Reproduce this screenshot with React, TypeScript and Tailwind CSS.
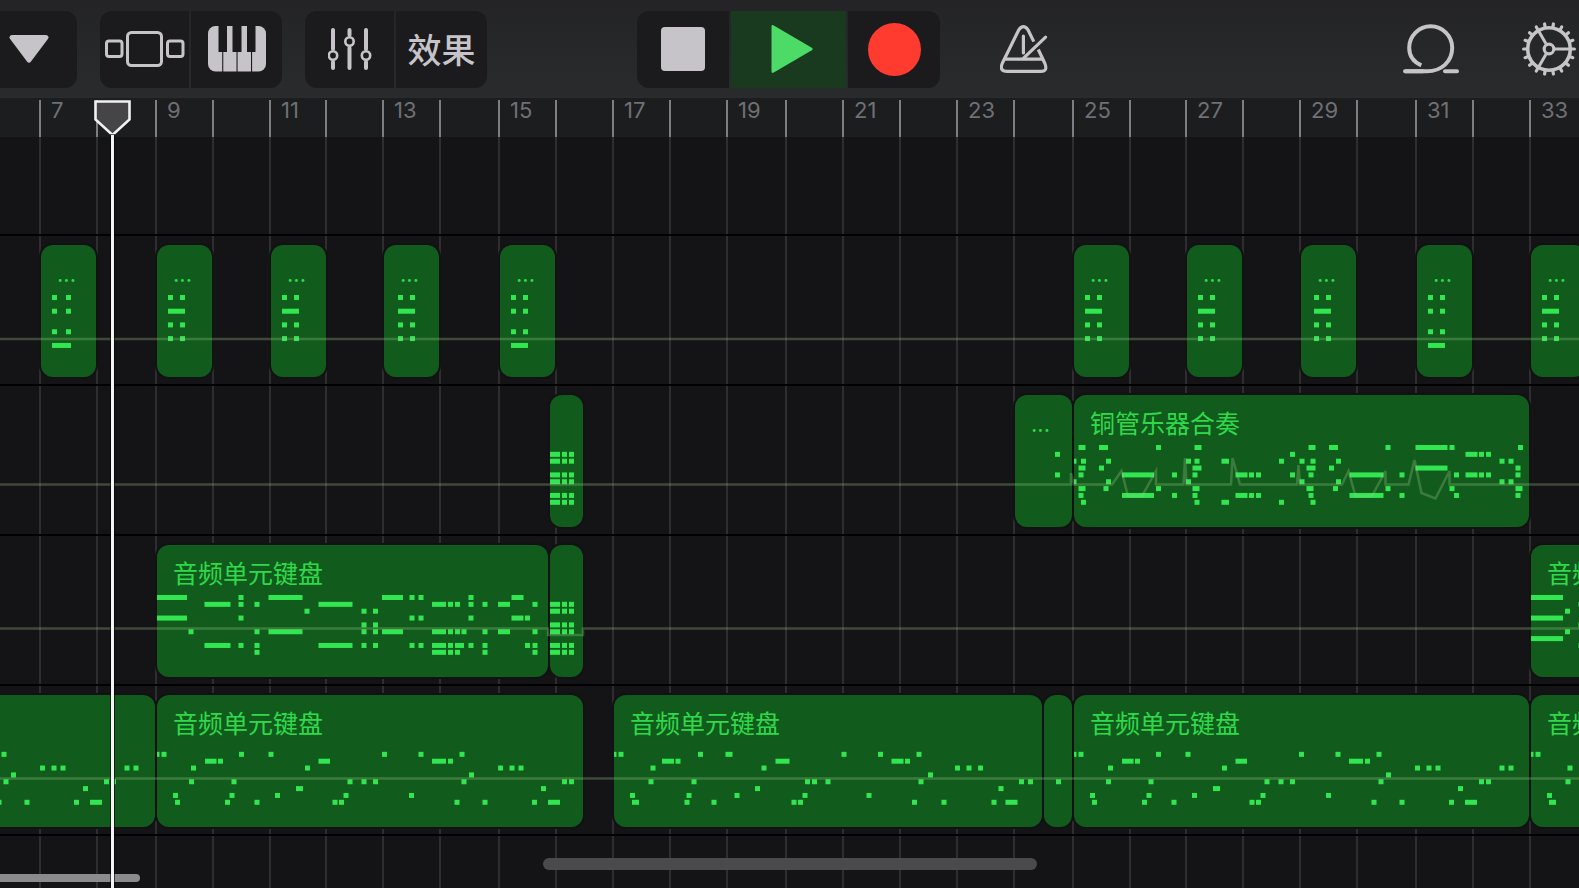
import type { ReactNode } from "react";
import clsx from "clsx";

// [x, row, width], the width is 5 when it is left out
type Note = [number, number, number?];

type Clip = {
    left: number;
    width: number;
    title?: string;
    notes: Note[];
}

type Track = {
    id: string;
    clips: Clip[];
    automation: string;
}

const FIRST_BAR = 7;
const RULER_START = 39;
const BAR_WIDTHS = [57, 59, 57, 57, 56, 57, 57, 59, 57, 57, 57, 57, 59, 57, 57, 57, 57, 59, 57, 56, 57, 57, 57, 59, 57, 57, 57];

const NOTE_TOP = 50;
const NOTE_STEP = 6.85;

const KEYS_TITLE = "音频单元键盘";
const BRASS_TITLE = "铜管乐器合奏";

const row = (r: number, xs: (number | [number, number])[]): Note[] =>
    xs.map((x) => typeof x === "number" ? [x, r] : [x[0], r, x[1]]);

const hitA: Note[] = [
    ...row(0, [11, 23]), ...row(2, [[11, 17]]), ...row(4, [11, 23]), ...row(6, [11, 23]),
];

const hitB: Note[] = [
    ...row(0, [11, 23]), ...row(2, [11, 23]), ...row(5, [11, 23]), ...row(7, [[11, 17]]),
];

const hitWide: Note[] = [
    ...row(0, [11, 25]), ...row(2, [11, 25]), ...row(5, [11, 25]), ...row(7, [[11, 19]]),
];

const stack: Note[] = [1, 2, 4, 5, 7, 8].flatMap((r) => row(r, [[0, 10], 12, 19]));

const brass: Note[] = [
    ...row(0, [[4.5, 7], [25, 9], 82, [120.5, 7], [234.5, 7], [255, 9], 311.5, [341.5, 32], 375.5, 444]),
    ...row(1, [216, [391.5, 12], 405, 412]),
    ...row(2, [[0, 2.5], 7, 32, 112, 120.5, [147.5, 7.5], 205, 225.5, 236.5, 262, 425.5, 434.5]),
    ...row(3, [[4.5, 7], 25, [118.5, 9], [232.5, 9], 255, [341.5, 32], 441.5]),
    ...row(4, [4.5, [48, 32], 98, 118.5, [161.5, 12], 175, 182, 216, 234.5, [275.5, 34], 325.5, 380, [391.5, 12], 405, 412, 441.5]),
    ...row(5, [[0, 2.5], 32, 112, 225.5, 262, 425.5, 434.5]),
    ...row(6, [[4.5, 7], 29.5, 82, [118.5, 7], [232.5, 7], 259, 311.5, 375.5, [441.5, 7]]),
    ...row(7, [4.5, [48, 32], 98, 118.5, [161.5, 12], 175, 182, 234.5, [275.5, 34], 325.5, 380, 441.5]),
    ...row(8, [7, 120.5, [147.5, 7.5], 205, 236.5]),
];

const chords: Note[] = [
    ...row(0, [[0, 30], 81.5, [111.5, 34], [225, 21], 252.5, 261.5, 311.5, [354.5, 12]]),
    ...row(1, [[47.5, 26], 81.5, 97.5, [161.5, 34], [275, 14], 291, 298, 311.5, 325.5, [341, 12], 375.5]),
    ...row(2, [147.5, 204.5, 216]),
    ...row(3, [[0, 30], 81.5, 252.5, 261.5, 311.5, [354.5, 12], 368]),
    ...row(4, [204.5, 216]),
    ...row(5, [31.5, 97.5, [111.5, 34], 204.5, 216, [225, 21], [275, 14], 291, 298, 304.5, 325.5, [341, 12], 375.5]),
    ...row(7, [[47.5, 26], 81.5, 97.5, [161.5, 34], 204.5, 216, 252.5, 261.5, [275, 14], 291, [298, 9], 311.5, 325.5, 368, 375.5]),
    ...row(8, [97.5, [275, 14], 291, 298, 325.5, 375.5]),
];

const chordsNext: Note[] = [
    ...row(0, [[0, 32]]), ...row(1, [47.5]), ...row(2, [34]), ...row(3, [[0, 32]]),
    ...row(4, [47.5]), ...row(5, [34]), ...row(6, [[0, 32]]), ...row(7, [47.5]),
];

const melody: Note[] = [
    ...row(1, [[0, 2.5], 4.5, 82, 111.5, 225, 261.5, 302.5]),
    ...row(2, [[48, 11.5], 61, [161.5, 11.5], [275, 14], 291]),
    ...row(3, [34, 148, 341, 352.5, 361.5]),
    ...row(4, [312]),
    ...row(5, [32, 74.5, 190.5, 204.5, 216, 304.5, 405, 412]),
    ...row(6, [[139, 7], 384]),
    ...row(7, [16, 72.5, 118, 186.5, 252]),
    ...row(8, [18, 68, 97.5, 175.5, 182, 297.5, 325.5, 375, [391, 12]]),
];

const melodyLong: Note[] = [...melody, ...row(3, [425.5, 434.5])];

const melodyAlt: Note[] = [
    ...row(1, [[0, 2.5], 4.5, 84, [111.5, 7], 227.5, 264, 302.5]),
    ...row(2, [[48, 12], 61.5, [161.5, 14], [277.5, 12], 291]),
    ...row(3, [36.5, 147.5, 341, 352.5, 364]),
    ...row(4, [314]),
    ...row(5, [34.5, 77.5, 191, 198, 211.5, 304.5, 405, 414]),
    ...row(6, [141, 384.5]),
    ...row(7, [16, 72.5, 120.5, 188.5, 252.5]),
    ...row(8, [[18, 7], 70.5, 97.5, 177.5, 184, 298, 327.5, 377.5, [391.5, 12]]),
];

const tracks: Track[] = [
    {
        id: "hits",
        automation: "M0 103H4000",
        clips: [
            { left: 41, width: 55, title: "...", notes: hitWide },
            { left: 157, width: 55, title: "...", notes: hitA },
            { left: 271, width: 55, title: "...", notes: hitA },
            { left: 384, width: 55, title: "...", notes: hitA.map(([x, r, w]) => [x + 3, r, w]) },
            { left: 500, width: 55, title: "...", notes: hitB },
            { left: 1074, width: 55, title: "...", notes: hitA },
            { left: 1187, width: 55, title: "...", notes: hitA },
            { left: 1301, width: 55, title: "...", notes: hitA.map(([x, r, w]) => [x + 2, r, w]) },
            { left: 1417, width: 55, title: "...", notes: hitB },
            { left: 1531, width: 55, title: "...", notes: hitA },
        ],
    },
    {
        id: "brass",
        automation: "M0 98.5H1071V87L1074 98.5H1112L1121.5 85L1128 110H1142L1156 85V98.5H1183.5L1185 72L1186.5 98.5H1231L1232.5 72L1240 98.5H1297L1298.5 79L1300 98.5H1342L1348.5 85L1355.5 110H1372L1385.5 85V98.5H1408.5L1414.5 74L1421.5 107L1435.5 112.5L1449.5 85V98.5H4000",
        clips: [
            { left: 550, width: 33, notes: stack },
            { left: 1015, width: 57, title: "...", notes: [...row(1, [40]), ...row(4, [40])] },
            { left: 1074, width: 455, title: BRASS_TITLE, notes: brass },
        ],
    },
    {
        id: "chords",
        automation: "M0 92.5H548V99H583V92.5H4000",
        clips: [
            { left: 157, width: 391, title: KEYS_TITLE, notes: chords },
            { left: 550, width: 33, notes: stack },
            { left: 1531, width: 455, title: KEYS_TITLE, notes: chordsNext },
        ],
    },
    {
        id: "melody",
        automation: "M0 92.5H4000",
        clips: [
            { left: -301, width: 456, notes: melodyLong },
            { left: 157, width: 426, title: KEYS_TITLE, notes: melody },
            { left: 614, width: 428, title: KEYS_TITLE, notes: melodyAlt },
            { left: 1044, width: 28, notes: row(5, [12]) },
            { left: 1074, width: 455, title: KEYS_TITLE, notes: melodyLong },
            { left: 1531, width: 455, title: KEYS_TITLE, notes: melodyAlt },
        ],
    },
];

const BrowserIcon = () => (
    <svg width="80" height="36" viewBox="0 0 80 36" fill="none" stroke="currentColor" strokeWidth="3">
        <rect x="1.5" y="10" width="15.5" height="15.5" rx="2.5" />
        <rect x="22.5" y="1.5" width="34" height="33" rx="4" />
        <rect x="62.5" y="10" width="15.5" height="15.5" rx="2.5" />
    </svg>
);

const KeyboardIcon = () => (
    <svg width="58" height="46" viewBox="0 0 58 46">
        <rect width="58" height="45.5" rx="7.5" fill="currentColor" />
        <g fill="#1b1b1d">
            <path d="M10.5 0H19V26H10.5zM24.5 0H33.5V26H24.5zM39 0H47.5V26H39z" />
            <path d="M14.2 26H15.3V46H14.2zM28.5 26H29.6V46H28.5zM43 26H44.1V46H43z" />
        </g>
    </svg>
);

const MixerIcon = () => (
    <svg width="44" height="44" viewBox="0 0 44 44" fill="none" stroke="currentColor" strokeLinecap="round">
        <path strokeWidth="4" d="M5 3V22M5 35V41M21.500 3V8M21.500 21V41M38 3V22M38 35V41" />
        <g strokeWidth="2.6">
            <circle cx="5" cy="28.500" r="4.200" />
            <circle cx="21.500" cy="14.500" r="4.200" />
            <circle cx="38" cy="28.500" r="4.200" />
        </g>
    </svg>
);

const MetronomeIcon = () => (
    <svg width="48" height="48" viewBox="0 0 48 48" fill="none" stroke="currentColor" strokeWidth="3.2" strokeLinecap="round" strokeLinejoin="round">
        <path strokeLinecap="butt" d="M38.3 24.5L44.9 38.5Q48 46.3 41 46.3H7Q-0.8 46.3 2.2 38.5L18.6 5.2Q23.4 -1.8 28.2 5.2L33.8 16.6" />
        <path d="M4.5 34.2H42.5M23.4 11V28" />
        <path d="M23.6 33.2L45.6 12.2" />
    </svg>
);

const LoopIcon = () => (
    <svg width="56" height="50" viewBox="0 0 56 50" fill="none" stroke="currentColor" strokeWidth="4" strokeLinecap="round">
        <path strokeLinecap="butt" d="M18.3 41.3C10.5 38 6.2 31.5 6.2 23.8A21.5 21.5 0 1 1 49.2 23.8C49.2 38 38 47.3 24 47.3H2" />
        <path d="M2 47.3H20M42 47.3H54" />
    </svg>
);

const GearIcon = () => (
    <svg width="54" height="54" viewBox="-27 -27 54 54" fill="none" stroke="currentColor" strokeWidth="3">
        <circle r="21.3" strokeWidth="3.6" />
        <circle r="4.8" strokeWidth="3.2" />
        {[0, 120, 240].map((a) => <path key={a} d="M6 0H20.5" transform={`rotate(${a})`} />)}
        {Array.from({ length: 18 }, (_, i) => (
            <path key={i} d="M22 0H25.400" strokeWidth="3.200" strokeLinecap="round" transform={`rotate(${i * 20})`} />
        ))}
    </svg>
);

const ToolButton = ({ label, className, children }: { label: string, className?: string, children: ReactNode }) => (
    <button type="button" aria-label={label} className={clsx("flex h-full shrink-0 items-center justify-center", className)}>
        {children}
    </button>
);

const Toolbar = () => (
    <header className="flex h-[98px] shrink-0 items-center bg-linear-to-b from-[#242426] to-[#292b2d] text-[#c6c4c8]">
        <div className="-ml-5 h-[77px] w-[97px] shrink-0 overflow-hidden rounded-xl bg-[#1b1b1d]">
            <ToolButton label="菜单" className="w-full">
                <svg width="40" height="28" viewBox="0 0 40 28">
                    <path d="M3 0H37Q41 1 38.5 4.5L22 26.5Q20 29 18 26.5L1.500 4.500Q-1 1 3 0z" fill="currentColor" />
                </svg>
            </ToolButton>
        </div>

        <div className="ml-[23px] flex h-[77px] shrink-0 gap-0.5 overflow-hidden rounded-xl">
            <ToolButton label="浏览器" className="w-[89px] bg-[#1b1b1d]"><BrowserIcon /></ToolButton>
            <ToolButton label="键盘" className="w-[91px] bg-[#1b1b1d]"><KeyboardIcon /></ToolButton>
        </div>

        <div className="ml-[23px] flex h-[77px] shrink-0 gap-0.5 overflow-hidden rounded-xl">
            <ToolButton label="混音器" className="w-[89px] bg-[#1b1b1d]"><MixerIcon /></ToolButton>
            <ToolButton label="效果" className="w-[91px] bg-[#1b1b1d] font-['Noto_Sans_CJK_SC',sans-serif] text-[34px] leading-10 font-medium">
                效果
            </ToolButton>
        </div>

        <div className="ml-[150px] flex h-[77px] shrink-0 gap-0.5 overflow-hidden rounded-xl">
            <ToolButton label="停止" className="w-[92px] bg-[#1b1b1d]">
                <span className="size-11 rounded bg-[#c6c4c8]" />
            </ToolButton>
            <ToolButton label="播放" className="w-[115px] bg-[#193a1f]">
                <svg width="48" height="48" viewBox="0 0 48 48" fill="#4cdb66">
                    <path d="M6.5 1.500Q6.500 -0.800 8.800 0.500L46.800 22.800Q48.500 24 46.800 25.200L8.800 47.500Q6.500 48.800 6.500 46.500z" />
                </svg>
            </ToolButton>
            <ToolButton label="录音" className="w-[92px] bg-[#1b1b1d]">
                <span className="size-[53px] rounded-full bg-[#ff3b30]" />
            </ToolButton>
        </div>

        <ToolButton label="节拍器" className="ml-[52px] w-16"><MetronomeIcon /></ToolButton>

        <div className="ml-auto flex h-full shrink-0 items-center">
            <ToolButton label="循环浏览器" className="w-20"><LoopIcon /></ToolButton>
            <ToolButton label="设置" className="ml-[47px] w-[61px]"><GearIcon /></ToolButton>
        </div>
    </header>
);

const Ruler = () => (
    <div className="flex h-[39px] shrink-0 bg-[#1c1d1f] pt-0.5" style={{ paddingLeft: RULER_START }}>
        {BAR_WIDTHS.map((width, i) => (
            <div
                key={i}
                className="shrink-0 border-l-2 border-[#7d7e82] pl-2.5 font-[Inter,sans-serif] text-[22px] leading-5 text-[#6f7074]"
                style={{ width }}
            >
                {i % 2 === 0 && FIRST_BAR + i}
            </div>
        ))}
    </div>
);

const GridLines = () => (
    <div className="absolute inset-0 flex" style={{ paddingLeft: RULER_START }}>
        {BAR_WIDTHS.map((width, i) => (
            <div key={i} className="shrink-0 border-l-2 border-[#2e2e30]" style={{ width }} />
        ))}
    </div>
);

const ClipBlock = ({ left, width, title, notes }: Clip) => (
    <button
        type="button"
        aria-label={title ?? "片段"}
        className="absolute top-[9px] h-[132px] overflow-hidden rounded-xl bg-[#115c1c] text-left text-[#30d94c] ring-2 ring-[#121214]"
        style={{ left, width }}
    >
        <svg className="absolute inset-0 size-full" fill="#32e652">
            {notes.map(([x, r, w = 5], i) => (
                <rect key={i} x={x} y={NOTE_TOP + r * NOTE_STEP} width={w} height="5" />
            ))}
        </svg>
        {title && (
            <span
                className={clsx(
                    "absolute top-[11px] left-4 whitespace-nowrap",
                    title === "..." ? "font-[Inter,sans-serif] text-[22px] leading-9" : "font-['Noto_Sans_CJK_SC',sans-serif] text-[25px] leading-8"
                )}
            >
                {title}
            </span>
        )}
    </button>
);

const TrackLane = ({ clips, automation }: Track) => (
    <div className="relative h-[150px] shrink-0 overflow-hidden border-b-2 border-black">
        {clips.map((clip) => <ClipBlock key={clip.left} {...clip} />)}
        <svg className="pointer-events-none absolute inset-0 size-full" fill="none">
            <path d={automation} stroke="rgb(160 200 140 / 0.3)" strokeWidth="2.5" />
        </svg>
    </div>
);

const Playhead = () => (
    <div className="pointer-events-none absolute top-0.5 bottom-0 left-[94px] flex w-[37px] flex-col items-center">
        <svg className="shrink-0" width="37" height="37" viewBox="0 0 37 37">
            <path d="M1.500 1.500H35.500V19.500L18.500 35L1.500 19.500z" fill="#454548" stroke="#f1f1f1" strokeWidth="2.600" />
        </svg>
        <div className="-mt-0.5 w-[3px] flex-1 bg-[#f4f4f4] ring-1 ring-black/60" />
    </div>
);

export default function App() {
    return <div className="flex h-screen flex-col overflow-hidden bg-[#141416]">
        <Toolbar />

        <main className="relative flex flex-1 flex-col overflow-hidden">
            <Ruler />

            <div className="relative flex flex-1 flex-col">
                <GridLines />
                <div className="relative h-[99px] shrink-0 border-b-2 border-black" />
                {tracks.map((track) => <TrackLane key={track.id} {...track} />)}
            </div>

            {/* scroll indicator and home bar */}
            <div className="absolute bottom-1.5 left-0 h-2 w-[140px] rounded-r-full bg-[#8b8b8d]" />
            <div className="absolute inset-x-0 bottom-[18px] flex justify-center">
                <div className="h-3 w-[494px] rounded-full bg-[#4a494c]" />
            </div>

            <Playhead />
        </main>
    </div>
}
